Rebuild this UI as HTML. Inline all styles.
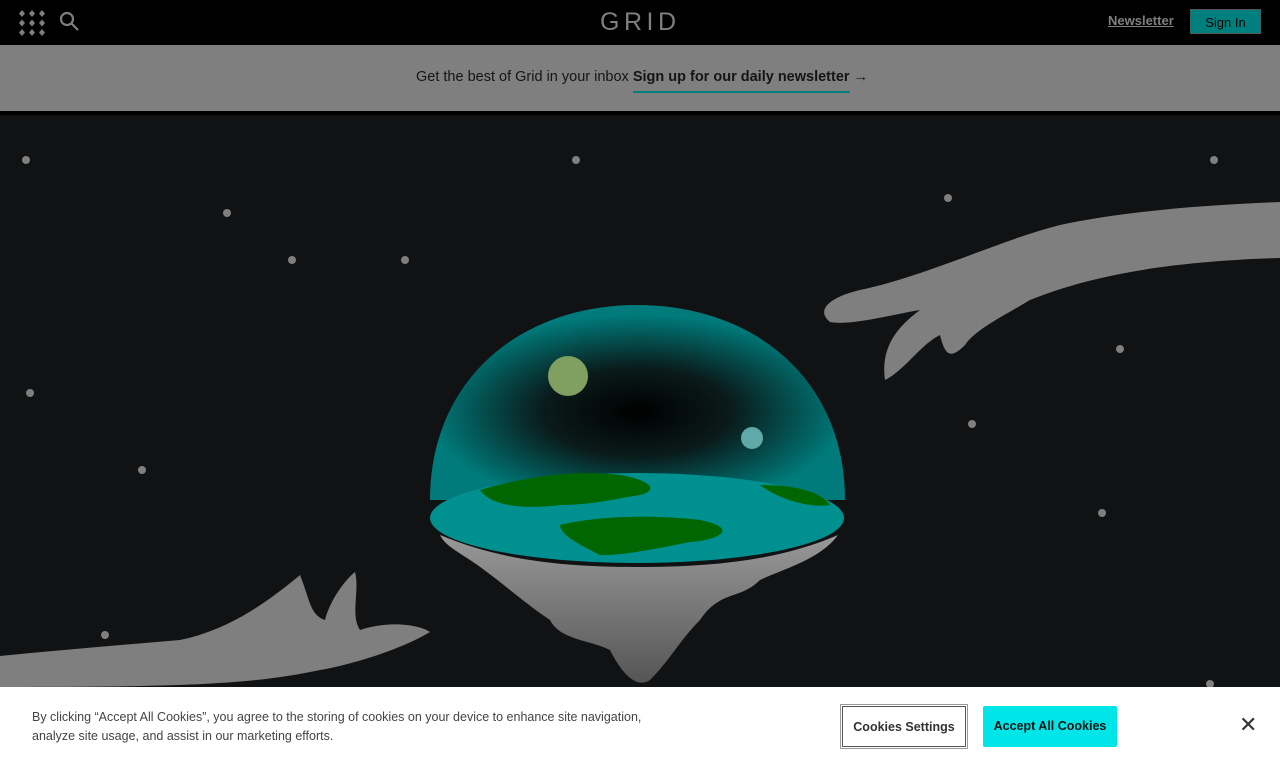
<!DOCTYPE html>
<html><head><meta charset="utf-8"><style>
*{margin:0;padding:0;box-sizing:border-box}
body{width:1280px;height:768px;overflow:hidden;background:#111214;font-family:"Liberation Sans",sans-serif;position:relative}
.top{position:absolute;left:0;top:0;width:1280px;height:45px;background:#000}
.logo{position:absolute;left:600px;top:8px;color:#7f7f7f;font-size:25px;letter-spacing:4.5px;font-weight:300}
.nl{position:absolute;left:1108px;top:13px;color:#7f7f7f;font-size:13px;font-weight:bold;text-decoration:underline}
.si{position:absolute;left:1190px;top:9px;width:71px;height:25px;background:#007f7f;color:#000;font-size:13px;text-align:center;line-height:26px;border:1px dotted #555}
.band{position:absolute;left:0;top:45px;width:1280px;height:66px;background:#7f7f7f}
.band p{position:absolute;left:416px;top:24px;font-size:14.5px;color:#151515}
.band b{position:relative}
.band b:after{content:"";position:absolute;left:0;right:0;bottom:-8px;height:2px;background:#007f7f}
.sep{position:absolute;top:111px;left:0;width:1280px;height:4px;background:#000}
.cookie{position:absolute;left:0;top:687px;width:1280px;height:81px;background:#fff}
.ct{position:absolute;left:32px;top:21px;font-size:12.5px;line-height:19px;color:#444;width:640px}
.cs{position:absolute;left:842px;top:706px;width:124px;height:41px;border:1px solid #555;outline:1px solid #999;outline-offset:1px;background:#fff;font-size:12.5px;font-weight:bold;color:#333;text-align:center;line-height:40px}
.ca{position:absolute;left:983px;top:706px;width:134px;height:41px;background:#00e6e8;border-radius:2px;font-size:12.5px;font-weight:bold;color:#111;text-align:center;line-height:41px}
.x{position:absolute;left:1239px;top:712px;font-size:22px;color:#333}
</style></head><body>
<div class="top">
<svg style="position:absolute;left:19px;top:10px" width="26" height="26" viewBox="0 0 26 26" fill="#7f7f7f">
<g id="d"><path d="M3 0L6 3.5L3 7L0 3.5Z"/><path d="M13 0L16 3.5L13 7L10 3.5Z"/><path d="M23 0L26 3.5L23 7L20 3.5Z"/></g>
<use href="#d" y="9.5"/><use href="#d" y="19"/>
</svg>
<svg style="position:absolute;left:59px;top:11px" width="22" height="22" viewBox="0 0 22 22" fill="none" stroke="#7f7f7f" stroke-width="2.2"><circle cx="8" cy="8" r="6"/><path d="M12.5 12.5L19 19"/></svg>
<div class="logo">GRID</div>
<div class="nl">Newsletter</div>
<div class="si">Sign In</div>
</div>
<div class="band"><p>Get the best of Grid in your inbox <b>Sign up for our daily newsletter</b> →</p></div>
<div class="sep"></div>
<svg style="position:absolute;left:0;top:115px" width="1280" height="572" viewBox="0 115 1280 572">
<defs><radialGradient id="g" cx="0.5" cy="0.55" r="0.5"><stop offset="0" stop-color="#000"/><stop offset="0.45" stop-color="#0a1a1a"/><stop offset="1" stop-color="#007a7a"/></radialGradient>
<linearGradient id="m" x1="0" y1="0" x2="0" y2="1"><stop offset="0" stop-color="#999"/><stop offset="1" stop-color="#555"/></linearGradient></defs>
<g fill="#7f7f7f">
<circle cx="26" cy="160" r="4"/><circle cx="227" cy="213" r="4"/><circle cx="292" cy="260" r="4"/><circle cx="405" cy="260" r="4"/><circle cx="576" cy="160" r="4"/><circle cx="948" cy="198" r="4"/><circle cx="1214" cy="160" r="4"/><circle cx="30" cy="393" r="4"/><circle cx="142" cy="470" r="4"/><circle cx="1120" cy="349" r="4"/><circle cx="972" cy="424" r="4"/><circle cx="1102" cy="513" r="4"/><circle cx="105" cy="635" r="4"/><circle cx="1210" cy="684" r="4"/>
<path d="M1280 202 C1200 205 1120 212 1060 225 C1000 240 930 275 860 290 C830 297 815 310 830 322 C850 326 890 315 920 310 C900 325 880 345 885 380 C905 370 920 345 940 335 C945 355 950 360 965 345 C975 330 1000 318 1030 300 C1080 280 1150 262 1280 258Z"/>
<path d="M0 656 C60 650 120 645 180 640 C230 630 270 600 300 575 C310 600 310 615 325 620 C330 600 345 580 355 572 C360 590 350 615 360 630 C390 620 420 625 430 632 C400 650 350 665 320 670 C250 685 180 687 0 687Z"/>
</g>
<path d="M430 500 C430 380 520 305 637 305 C755 305 845 380 845 500Z" fill="url(#g)"/>
<circle cx="568" cy="376" r="20" fill="#7fa060"/><circle cx="752" cy="438" r="11" fill="#5fa9a9"/>
<ellipse cx="637" cy="518" rx="207" ry="45" fill="#009090"/>
<path d="M480 490 C530 475 580 470 620 475 C650 480 660 490 640 495 C610 500 590 505 560 505 C520 510 490 505 480 490Z M560 525 C600 515 660 515 700 520 C740 528 720 540 690 542 C660 548 620 556 600 555 C580 545 560 535 560 525Z M760 485 C790 485 820 490 830 505 C810 508 780 500 760 485Z" fill="#006600"/>
<path d="M440 535 C500 560 560 567 637 567 C715 567 780 560 838 535 C820 560 780 570 760 580 C740 600 720 590 700 620 C680 640 670 660 650 680 C635 690 620 670 610 650 C590 640 560 640 550 620 C520 600 500 580 470 560 C455 550 445 545 440 535Z" fill="url(#m)"/>
</svg>
<div class="cookie"><div class="ct">By clicking “Accept All Cookies”, you agree to the storing of cookies on your device to enhance site navigation, analyze site usage, and assist in our marketing efforts.</div></div>
<div class="cs">Cookies Settings</div>
<div class="ca">Accept All Cookies</div>
<div class="x">✕</div>
</body></html>
